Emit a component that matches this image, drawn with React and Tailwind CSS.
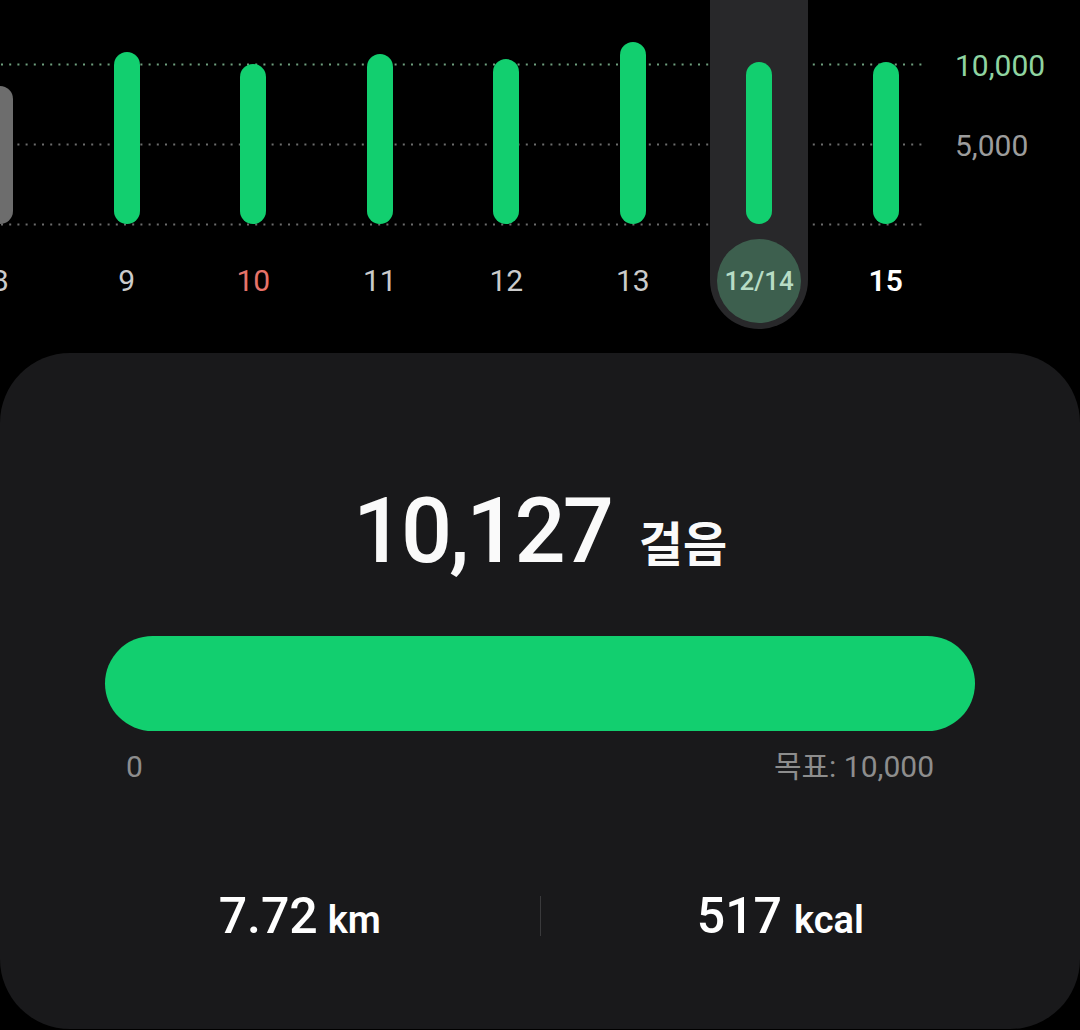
import React from 'react';

const days = [
  { label: '8', height: 138, gray: true },
  { label: '9', height: 172 },
  { label: '10', height: 160, red: true },
  { label: '11', height: 170 },
  { label: '12', height: 165 },
  { label: '13', height: 182 },
  { label: '12/14', height: 162, selected: true },
  { label: '15', height: 162, today: true },
];

const Bar = ({ day }) => (
  <div
    className={`w-[26px] rounded-full ${day.gray ? 'bg-[#6d6d6d]' : 'bg-[#12cf6f]'}`}
    style={{ height: day.height }}
  />
);

const DayColumn = ({ day }) => {
  if (day.selected) {
    return (
      <div className="w-[126.5px] flex flex-col items-center shrink-0">
        <div className="w-[98px] -mt-[60px] pt-[60px] pb-[6px] rounded-full bg-[#28282a] flex flex-col items-center">
          <div className="h-[224px] flex items-end">
            <Bar day={day} />
          </div>
          <div className="mt-[15px] w-[84px] h-[84px] rounded-full bg-[#3d5f4e] flex items-center justify-center text-[26px] font-medium text-[#b7dcc5] leading-none">
            {day.label}
          </div>
        </div>
      </div>
    );
  }

  let color = 'text-[#cbcbcb]';
  if (day.red) color = 'text-[#e6736a]';
  if (day.today) color = 'text-white font-semibold';

  return (
    <div className="w-[126.5px] flex flex-col items-center shrink-0">
      <div className="h-[224px] flex items-end">
        <Bar day={day} />
      </div>
      <div className={`mt-[15px] h-[84px] flex items-center text-[30px] leading-none ${color}`}>
        {day.label}
      </div>
    </div>
  );
};

const App = () => {
  return (
    <div className="w-[1080px] h-[1030px] bg-black overflow-hidden font-[Roboto,Noto_Sans_CJK_KR,sans-serif] text-white">
      {/* weekly chart */}
      <div className="flex h-[353px]">
        <div className="relative w-[924px] h-[353px]">
          <svg className="absolute top-0 left-0" width="922" height="230">
            <line x1="1" y1="64.5" x2="922" y2="64.5" stroke="#6f9f7e" strokeWidth="2" strokeDasharray="2 6.2" />
            <line x1="1" y1="144.5" x2="922" y2="144.5" stroke="#6c6c6c" strokeWidth="2" strokeDasharray="2 6.2" />
            <line x1="1" y1="224.5" x2="922" y2="224.5" stroke="#6c6c6c" strokeWidth="2" strokeDasharray="2 6.2" />
          </svg>
          <div className="relative flex -ml-[63px]">
            {days.map((day) => (
              <DayColumn key={day.label} day={day} />
            ))}
          </div>
        </div>
        <div className="flex flex-col pl-[31px] pt-[48px] gap-[44px] text-[30px] leading-[36px]">
          <span className="text-[#8fd4a1]">10,000</span>
          <span className="text-[#9c9c9c]">5,000</span>
        </div>
      </div>

      {/* summary card */}
      <div className="h-[676px] rounded-[70px] bg-[#19191b] flex flex-col">
        <div className="pt-[134px] h-[224px] flex items-baseline justify-center gap-[28px]">
          <span className="text-[90px] leading-[90px] font-medium tracking-[-3px] text-[#fafafa]">10,127</span>
          <span className="text-[48px] leading-[48px] font-bold text-[#fafafa]">걸음</span>
        </div>

        <div className="mx-[105px] mt-[59px] h-[95px] rounded-full bg-[#12cf6f]" />

        <div className="mx-[105px] mt-[18px] pl-[21px] pr-[41px] flex justify-between text-[30px] leading-[36px] text-[#8d8d8d]">
          <span>0</span>
          <span>목표: 10,000</span>
        </div>

        <div className="mt-[106px] px-[60px] flex items-center">
          <div className="flex-1 flex items-baseline justify-center gap-[10px]">
            <span className="text-[50px] leading-[50px] font-medium">7.72</span>
            <span className="text-[38px] leading-[38px] font-semibold">km</span>
          </div>
          <div className="w-px h-[40px] bg-[#3a3a3c]" />
          <div className="flex-1 flex items-baseline justify-center gap-[12px]">
            <span className="text-[50px] leading-[50px] font-medium">517</span>
            <span className="text-[38px] leading-[38px] font-semibold">kcal</span>
          </div>
        </div>
      </div>
    </div>
  );
};

export default App;
